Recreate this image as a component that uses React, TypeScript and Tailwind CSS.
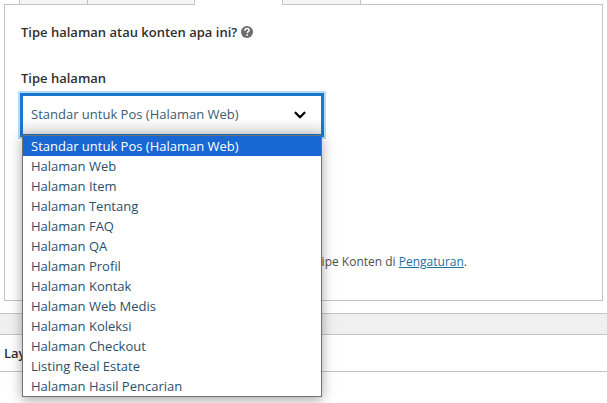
import { ChevronDown } from 'lucide-react';

const pageTypes = [
  'Standar untuk Pos (Halaman Web)',
  'Halaman Web',
  'Halaman Item',
  'Halaman Tentang',
  'Halaman FAQ',
  'Halaman QA',
  'Halaman Profil',
  'Halaman Kontak',
  'Halaman Web Medis',
  'Halaman Koleksi',
  'Halaman Checkout',
  'Listing Real Estate',
  'Halaman Hasil Pencarian',
];

function Tabs() {
  return (
    <div className="flex h-1 pl-[15px]">
      <div className="w-[69px] border-x border-[#c3c4c7] bg-[#f5f5f5]" />
      <div className="w-[107px] border-r border-[#c3c4c7] bg-[#f5f5f5]" />
      <div className="-mb-px w-[87px] bg-white" />
      <div className="w-[79px] border-x border-[#c3c4c7] bg-[#f5f5f5]" />
    </div>
  );
}

function PageTypeSelect() {
  return (
    <div className="relative w-[302px]">
      <select
        id="page-type"
        defaultValue={pageTypes[0]}
        className="block h-[42px] w-full appearance-none border-2 border-[#1b76cd] bg-linear-to-b from-white from-60% to-[#e4e4e4] pl-2 text-[13px] text-[#3b5a72] shadow-[0_0_0_1px_#1b76cd,0_0_0_3px_#b5dcf6] outline-none"
      >
        {pageTypes.map((type) => (
          <option key={type}>{type}</option>
        ))}
      </select>
      <ChevronDown className="pointer-events-none absolute top-3 right-3.5 size-[18px] text-black" strokeWidth={3} />

      {/* Open menu */}
      <ul
        role="listbox"
        aria-label="Tipe halaman"
        className="absolute top-[41px] left-px z-10 w-[300px] border border-[#707274] bg-white text-[13px]/5 text-[#2b4f6b] shadow-[0_3px_12px_rgba(0,0,0,0.35)]"
      >
        {pageTypes.map((type, i) => (
          <li
            key={type}
            role="option"
            aria-selected={i === 0}
            className="pl-2 aria-selected:bg-[#1967d2] aria-selected:text-white"
          >
            {type}
          </li>
        ))}
      </ul>
    </div>
  );
}

export default function App() {
  return (
    <div className="min-h-screen overflow-hidden bg-white font-['Open_Sans','Noto_Sans',sans-serif] text-[13px] text-[#303030]">
      <section className="border-b border-[#c3c4c7] px-1 pb-3">
        <Tabs />
        <div className="h-[297px] border border-[#c3c4c7] px-4 pt-[15px]">
          <h2 className="flex items-center gap-1 text-[13px]/6 font-semibold">
            Tipe halaman atau konten apa ini?
            <button type="button" aria-label="Bantuan" className="flex">
              <svg viewBox="0 0 12 12" className="size-3">
                <circle cx="6" cy="6" r="6" fill="#6c6c6c" />
                <path d="M3.9 4.7C3.9 3.3 4.8 2.6 6 2.6s2.1.7 2.1 1.7c0 1.3-1.9 1.4-1.9 2.8" fill="none" stroke="#fff" strokeWidth="1.5" />
                <circle cx="6.1" cy="9" r=".9" fill="#fff" />
              </svg>
            </button>
          </h2>
          <label htmlFor="page-type" className="mt-[22px] mb-1 block text-[13px]/6 font-semibold">
            Tipe halaman
          </label>
          <PageTypeSelect />
          <p className="mt-[116px] pl-[294px] text-xs/5 text-[#505050]">
            Tipe Konten di{' '}
            <a href="#pengaturan" className="text-[#2271a1] underline">Pengaturan</a>.
          </p>
        </div>
      </section>
      <div className="h-5 bg-[#f0f0f1]" />
      <section className="border-y border-[#c3c4c7] px-1 py-2">
        <h2 className="text-[13px]/5 font-semibold">Lay</h2>
      </section>
    </div>
  );
}
